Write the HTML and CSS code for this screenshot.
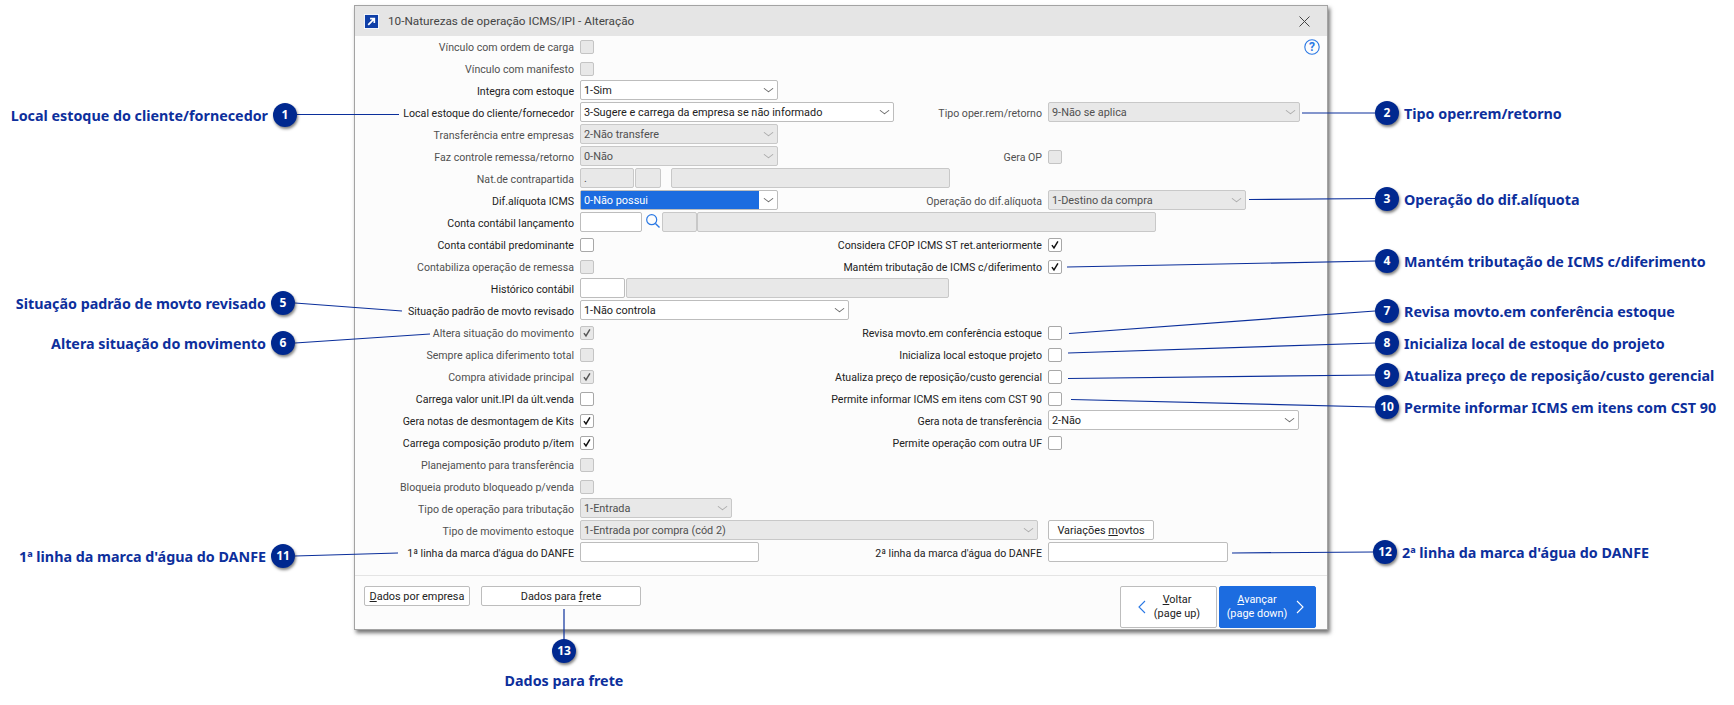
FILE: index.html
```html
<!DOCTYPE html>
<html lang="pt-BR">
<head>
<meta charset="utf-8">
<title>10-Naturezas de operação ICMS/IPI - Alteração</title>
<link rel="stylesheet" href="styles.css">
</head>
<body>
<svg width="0" height="0" class="defs"><defs><symbol id="chk" viewBox="0 0 14 14"><path d="M3.4 7.2 5.8 10.4 10.4 2.9" fill="none" stroke-width="1.7"/></symbol></defs></svg>
<main class="window">
  <header class="titlebar">
    <svg class="appicon" viewBox="0 0 16 16"><rect width="16" height="16" fill="#fff"/><rect x="1" y="1" width="14" height="14" fill="#0f3fa8"/><path d="M4.5 11.5 10.5 5.5M6.5 5h4.5v4.5" fill="none" stroke="#fff" stroke-width="1.8"/></svg>
    <span class="title">10-Naturezas de operação ICMS/IPI - Alteração</span>
    <svg class="close" viewBox="0 0 11 11"><path d="M.5.5l10 10M10.5.5l-10 10" stroke="#444" stroke-width="1" fill="none"/></svg>
  </header>
  <section class="form">
    <div class="lbl off">Vínculo com ordem de carga</div><div class="mid"><span class="cb dis"></span></div><div class="end help"><svg class="helpicon" viewBox="0 0 16 16"><circle cx="8" cy="8" r="7.2" fill="none" stroke="#2a78e4" stroke-width="1.1"/><text x="8" y="11.5" text-anchor="middle" class="helpq">?</text></svg></div>
    <div class="lbl off">Vínculo com manifesto</div><div class="mid"><span class="cb dis"></span></div><div class="end"></div>
    <div class="lbl">Integra com estoque</div><div class="mid"><span class="sel w198">1-Sim</span></div><div class="end"></div>
    <div class="lbl">Local estoque do cliente/fornecedor</div><div class="mid"><span class="sel w314">3-Sugere e carrega da empresa se não informado</span><span class="rlbl off">Tipo oper.rem/retorno</span></div><div class="end"><span class="sel dis w252">9-Não se aplica</span></div>
    <div class="lbl off">Transferência entre empresas</div><div class="mid"><span class="sel dis w198">2-Não transfere</span></div><div class="end"></div>
    <div class="lbl off">Faz controle remessa/retorno</div><div class="mid"><span class="sel dis w198">0-Não</span><span class="rlbl off">Gera OP</span></div><div class="end"><span class="cb dis"></span></div>
    <div class="lbl off">Nat.de contrapartida</div><div class="mid wide"><span class="inp dis w53">.</span><span class="inp dis w26"></span><span class="inp dis w278 ml9"></span></div>
    <div class="lbl">Dif.alíquota ICMS</div><div class="mid"><span class="sel w198 hl"><span class="hlfill">0-Não possui</span></span><span class="rlbl off">Operação do dif.alíquota</span></div><div class="end"><span class="sel dis w198">1-Destino da compra</span></div>
    <div class="lbl">Conta contábil lançamento</div><div class="mid wide"><span class="inp w62"></span><svg class="search" viewBox="0 0 16 16"><circle cx="6.7" cy="6.7" r="5" fill="none" stroke="#2a78e4" stroke-width="1.2"/><path d="M10.4 10.4 14.5 14.5" stroke="#2a78e4" stroke-width="1.4"/></svg><span class="inp dis w35"></span><span class="inp dis w459"></span></div>
    <div class="lbl">Conta contábil predominante</div><div class="mid"><span class="cb"></span><span class="rlbl">Considera CFOP ICMS ST ret.anteriormente</span></div><div class="end"><span class="cb"><svg class="tick"><use href="#chk"/></svg></span></div>
    <div class="lbl off">Contabiliza operação de remessa</div><div class="mid"><span class="cb dis"></span><span class="rlbl">Mantém tributação de ICMS c/diferimento</span></div><div class="end"><span class="cb"><svg class="tick"><use href="#chk"/></svg></span></div>
    <div class="lbl">Histórico contábil</div><div class="mid wide"><span class="inp w44"></span><span class="inp dis w323"></span></div>
    <div class="lbl">Situação padrão de movto revisado</div><div class="mid"><span class="sel w269">1-Não controla</span></div><div class="end"></div>
    <div class="lbl off">Altera situação do movimento</div><div class="mid"><span class="cb dis"><svg class="tick grey"><use href="#chk"/></svg></span><span class="rlbl">Revisa movto.em conferência estoque</span></div><div class="end"><span class="cb"></span></div>
    <div class="lbl off">Sempre aplica diferimento total</div><div class="mid"><span class="cb dis"></span><span class="rlbl">Inicializa local estoque projeto</span></div><div class="end"><span class="cb"></span></div>
    <div class="lbl off">Compra atividade principal</div><div class="mid"><span class="cb dis"><svg class="tick grey"><use href="#chk"/></svg></span><span class="rlbl">Atualiza preço de reposição/custo gerencial</span></div><div class="end"><span class="cb"></span></div>
    <div class="lbl">Carrega valor unit.IPI da últ.venda</div><div class="mid"><span class="cb"></span><span class="rlbl">Permite informar ICMS em itens com CST 90</span></div><div class="end"><span class="cb"></span></div>
    <div class="lbl">Gera notas de desmontagem de Kits</div><div class="mid"><span class="cb"><svg class="tick"><use href="#chk"/></svg></span><span class="rlbl">Gera nota de transferência</span></div><div class="end"><span class="sel w251">2-Não</span></div>
    <div class="lbl">Carrega composição produto p/item</div><div class="mid"><span class="cb"><svg class="tick"><use href="#chk"/></svg></span><span class="rlbl">Permite operação com outra UF</span></div><div class="end"><span class="cb"></span></div>
    <div class="lbl off">Planejamento para transferência</div><div class="mid"><span class="cb dis"></span></div><div class="end"></div>
    <div class="lbl off">Bloqueia produto bloqueado p/venda</div><div class="mid"><span class="cb dis"></span></div><div class="end"></div>
    <div class="lbl off">Tipo de operação para tributação</div><div class="mid"><span class="sel dis w152">1-Entrada</span></div><div class="end"></div>
    <div class="lbl off">Tipo de movimento estoque</div><div class="mid"><span class="sel dis w458">1-Entrada por compra (cód 2)</span></div><div class="end"><span class="btn w106"><span>Variações <u>m</u>ovtos</span></span></div>
    <div class="lbl">1ª linha da marca d'água do DANFE</div><div class="mid"><span class="inp w179"></span><span class="rlbl">2ª linha da marca d'água do DANFE</span></div><div class="end"><span class="inp w180"></span></div>
  </section>
  <footer class="footer">
    <div class="fgroup">
      <span class="btn w106"><span><u>D</u>ados por empresa</span></span>
      <span class="btn w160"><span>Dados para <u>f</u>rete</span></span>
    </div>
    <div class="nav">
      <span class="navbtn back">
        <svg class="chev" viewBox="0 0 8 14"><path d="M7 1 1 7l6 6" fill="none" stroke="#2a78e4" stroke-width="1.1"/></svg>
        <span class="navtext"><u>V</u>oltar<br>(page up)</span>
      </span>
      <span class="navbtn next">
        <span class="navtext"><u>A</u>vançar<br>(page down)</span>
        <svg class="chev" viewBox="0 0 8 14"><path d="M1 1l6 6-6 6" fill="none" stroke="#fff" stroke-width="1.1"/></svg>
      </span>
    </div>
  </footer>
</main>

<svg class="leaders" viewBox="0 0 1734 705">
  <path d="M297 114.5H399"/>
  <path d="M1302 113H1375"/>
  <path d="M1249 199.5 1375 198.5"/>
  <path d="M1067 267 1375 261"/>
  <path d="M295 303 402 311"/>
  <path d="M295 343 430 334"/>
  <path d="M1069 333.5 1375 311"/>
  <path d="M1068 353 1375 343"/>
  <path d="M1068 378.5 1375 375"/>
  <path d="M1071 399.5 1375 407"/>
  <path d="M295 556 398 553"/>
  <path d="M1232 553 1373 552"/>
  <path d="M564 609V640"/>
</svg>

<div class="co left c1"><span class="cotext">Local estoque do cliente/fornecedor</span><span class="badge">1</span></div>
<div class="co right c2"><span class="badge">2</span><span class="cotext">Tipo oper.rem/retorno</span></div>
<div class="co right c3"><span class="badge">3</span><span class="cotext">Operação do dif.alíquota</span></div>
<div class="co right c4"><span class="badge">4</span><span class="cotext">Mantém tributação de ICMS c/diferimento</span></div>
<div class="co left c5"><span class="cotext">Situação padrão de movto revisado</span><span class="badge">5</span></div>
<div class="co left c6"><span class="cotext">Altera situação do movimento</span><span class="badge">6</span></div>
<div class="co right c7"><span class="badge">7</span><span class="cotext">Revisa movto.em conferência estoque</span></div>
<div class="co right c8"><span class="badge">8</span><span class="cotext">Inicializa local de estoque do projeto</span></div>
<div class="co right c9"><span class="badge">9</span><span class="cotext">Atualiza preço de reposição/custo gerencial</span></div>
<div class="co right c10"><span class="badge">10</span><span class="cotext">Permite informar ICMS em itens com CST 90</span></div>
<div class="co left c11"><span class="cotext">1ª linha da marca d'água do DANFE</span><span class="badge">11</span></div>
<div class="co right c12"><span class="badge">12</span><span class="cotext">2ª linha da marca d'água do DANFE</span></div>
<div class="co bottom c13"><span class="badge">13</span><span class="cotext">Dados para frete</span></div>
</body>
</html>
```
FILE: styles.css
```css
* { box-sizing: border-box; }
html, body { margin: 0; padding: 0; }
body {
  position: relative;
  width: 1734px;
  height: 705px;
  overflow: hidden;
  background: #fff;
  font-family: Roboto, "Noto Sans", sans-serif;
  font-size: 10.9px;
  color: #222;
  padding-top: 5px;
  padding-left: 354px;
}
.defs { position: absolute; }

.window {
  width: 974px;
  height: 625px;
  background: #fcfcfc;
  border: 1px solid #a3a3a3;
  box-shadow: 2px 3px 4px rgba(0, 0, 0, .55);
}
.titlebar {
  height: 30px;
  background: #e5e5e5;
  display: flex;
  align-items: center;
  padding: 0 17px 0 9px;
}
.appicon { width: 15px; height: 15px; flex: none; }
.title { margin-left: 9px; color: #444; flex: 1; font-size: 11.75px; }
.close { width: 11px; height: 11px; }

.form {
  display: grid;
  grid-template-columns: 219px 462px 280px;
  column-gap: 6px;
  grid-auto-rows: 22px;
  height: 539px;
}
.lbl, .rlbl {
  text-align: right;
  white-space: nowrap;
  line-height: 23px;
  font-size: 10.6px;
}
.off { color: #505050; }
.mid, .end {
  display: flex;
  align-items: center;
  min-width: 0;
}
.mid { justify-content: space-between; }
.mid.wide { grid-column: 2 / 4; justify-content: flex-start; }
.help { justify-content: flex-end; padding-right: 8px; }
.helpicon { width: 16px; height: 16px; }
.helpq { font-size: 12px; font-weight: 700; fill: #2a78e4; }

.cb {
  width: 14px;
  height: 14px;
  flex: none;
  border: 1px solid #a8a8a8;
  border-radius: 2px;
  background: #fff;
  display: block;
}
.cb.dis { background: #e8e8e8; border-color: #c4c4c4; }
.tick { display: block; width: 12px; height: 12px; stroke: #111; }
.tick.grey { stroke: #555; }

.sel, .inp {
  display: block;
  position: relative;
  height: 20px;
  line-height: 19px;
  flex: none;
  align-self: flex-start;
  padding-left: 3px;
  background: #fff;
  border: 1px solid #bdbdbd;
  border-radius: 2px;
  white-space: nowrap;
}
.sel::after {
  content: "";
  position: absolute;
  right: 5px;
  top: 4px;
  width: 6px;
  height: 6px;
  border-right: 1px solid #666;
  border-bottom: 1px solid #666;
  transform: scaleY(.75) rotate(45deg);
}
.dis { background: #e8e8e8; border-color: #c8c8c8; color: #505050; }
.sel.dis::after { border-color: #aaa; }
.hl { padding-left: 0; }
.hlfill {
  display: block;
  width: 178px;
  height: 18px;
  padding-left: 3px;
  background: #1c6ce0;
  color: #fff;
}
.search { width: 16px; height: 16px; margin: 1px 1px 0 3px; align-self: flex-start; }
.ml9 { margin-left: 10px; }
.w26 { width: 26px; margin-left: 1px; }
.w35 { width: 35px; }
.w44 { width: 45px; margin-right: 1px; }
.w53 { width: 54px; }
.w62 { width: 62px; }
.w152 { width: 152px; }
.w179 { width: 179px; }
.w180 { width: 180px; }
.w198 { width: 198px; }
.w251 { width: 251px; }
.w252 { width: 252px; }
.w269 { width: 269px; }
.w278 { width: 279px; }
.w314 { width: 314px; }
.w323 { width: 323px; }
.w459 { width: 459px; }
.w458 { width: 458px; }
.w106 { width: 106px; }
.w160 { width: 160px; }

.btn {
  display: flex;
  justify-content: center;
  align-items: center;
  height: 20px;
  flex: none;
  align-self: flex-start;
  background: #fff;
  border: 1px solid #bdbdbd;
  border-radius: 2px;
  white-space: nowrap;
}
.footer {
  height: 54px;
  border-top: 1px solid #e4e4e4;
  display: flex;
  justify-content: space-between;
  padding: 10px 11px 0 9px;
}
.fgroup { display: flex; gap: 11px; }
.nav { display: flex; gap: 2px; }
.navbtn {
  width: 97px;
  height: 42px;
  border: 1px solid #bdbdbd;
  border-radius: 2px;
  background: #fff;
  display: flex;
  align-items: center;
  gap: 6px;
  line-height: 14px;
  text-align: center;
  white-space: nowrap;
}
.navbtn.back { padding-left: 17px; }
.navbtn.next { background: #1c6ce0; border-color: #1c6ce0; color: #fff; gap: 2px; }
.navtext { flex: 1; }
.chev { width: 8px; height: 14px; flex: none; }
.navbtn.next .chev { margin-right: 11px; }
.navbtn.back .navtext { padding-right: 14px; }

.leaders {
  position: absolute;
  left: 0;
  top: 0;
  width: 1734px;
  height: 705px;
  pointer-events: none;
}
.leaders path { stroke: #0b2f9b; stroke-width: 1.2; fill: none; }

.co {
  position: absolute;
  display: flex;
  align-items: center;
  gap: 5px;
  height: 24px;
  white-space: nowrap;
  font-family: "Noto Sans", sans-serif;
}
.left { right: 1437px; }
.right { left: 1375px; }
.bottom { left: 464px; width: 200px; flex-direction: column; height: auto; gap: 8px; }
.badge {
  width: 24px;
  height: 24px;
  flex: none;
  border-radius: 50%;
  background: #00288f;
  color: #fff;
  font-weight: 700;
  font-size: 12px;
  line-height: 24px;
  text-align: center;
  box-shadow: 1px 2px 3px rgba(0, 0, 0, .5);
}
.cotext { color: #0d2f9c; font-weight: 700; font-size: 14.3px; }
.c1 { top: 103px; }
.c2 { top: 101px; }
.c3 { top: 187px; }
.c4 { top: 249px; }
.c5 { top: 291px; right: 1439px; }
.c6 { top: 331px; right: 1439px; }
.c7 { top: 299px; }
.c8 { top: 331px; }
.c9 { top: 363px; }
.c10 { top: 395px; }
.c11 { top: 544px; right: 1439px; }
.c12 { top: 540px; left: 1373px; }
.c13 { top: 639px; }
```
